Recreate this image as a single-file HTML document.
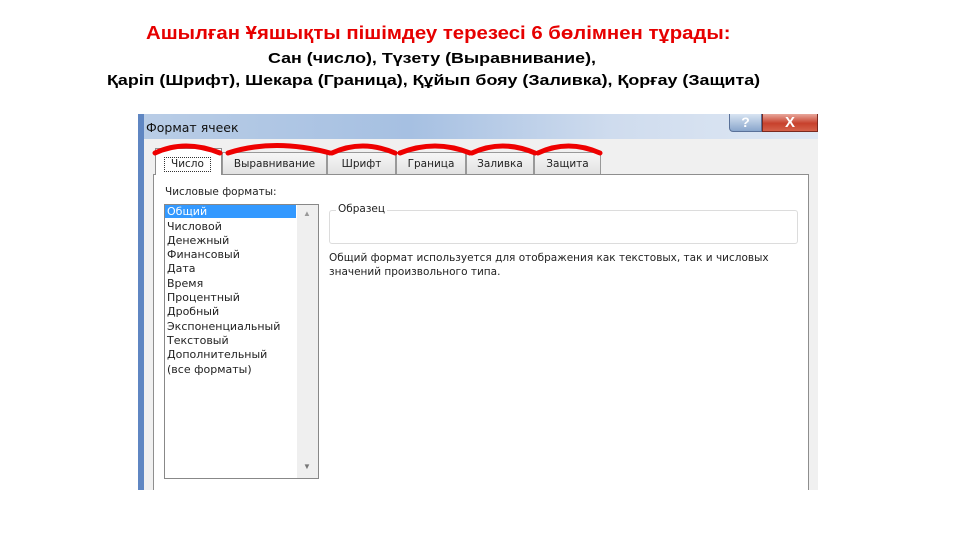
<!DOCTYPE html>
<html><head><meta charset="utf-8"><style>
*{margin:0;padding:0;box-sizing:border-box}
body{width:960px;height:540px;background:#fff;position:relative;overflow:hidden;font-family:"Liberation Sans","DejaVu Sans",sans-serif}
.h{position:absolute;font-weight:bold;white-space:nowrap;transform-origin:0 0}
.a{position:absolute}
.ui{font-family:"DejaVu Sans","Liberation Sans",sans-serif;font-size:10.5px;color:#222;white-space:nowrap}
.tab{position:absolute;top:152px;height:22px;background:linear-gradient(#f6f6f6,#e2e2e2);border:1px solid #999;border-bottom:none;text-align:center;line-height:22px}
.li{position:absolute;left:167px;font-size:11px}
</style></head><body>
<div class="h" style="left:146px;top:23px;font-size:18px;color:#e60000;transform:scaleX(1.13)">Ашылған Ұяшықты пішімдеу терезесі 6 бөлімнен тұрады:</div>
<div class="h" style="left:268px;top:50px;font-size:15px;color:#000;transform:scaleX(1.19)">Сан (число), Түзету (Выравнивание),</div>
<div class="h" style="left:107px;top:72px;font-size:15px;color:#000;transform:scaleX(1.19)">Қаріп (Шрифт), Шекара (Граница), Құйып бояу (Заливка), Қорғау (Защита)</div>

<div class="a" style="left:138px;top:114px;width:680px;height:376px;background:#f0f0f0"></div>
<div class="a" style="left:138px;top:114px;width:680px;height:25px;background:linear-gradient(90deg,#b9cde6,#a6c0e2 40%,#cfdcee 70%,#dfe8f4)"></div>
<div class="a" style="left:138px;top:114px;width:6px;height:376px;background:#5f86c2"></div>
<div class="a ui" style="left:146px;top:120px;font-size:12.5px;color:#111">Формат ячеек</div>
<div class="a" style="left:729px;top:114px;width:33px;height:18px;background:linear-gradient(#d8e4f2,#8aa6cc);border:1px solid #5a7199;border-top:none;border-radius:0 0 0 4px;color:#fff;font-weight:bold;text-align:center;font-size:14px;line-height:17px">?</div>
<div class="a" style="left:762px;top:114px;width:56px;height:18px;background:linear-gradient(#e8a79c,#c7412c 55%,#d5614a);border:1px solid #7a2a20;border-top:none;color:#fff;font-weight:bold;text-align:center;font-size:15px;line-height:17px">X</div>

<div class="a" style="left:153px;top:174px;width:656px;height:316px;background:#fff;border:1px solid #8e8e8e;border-bottom:none"></div>
<div class="tab ui" style="left:222px;width:105px">Выравнивание</div>
<div class="tab ui" style="left:327px;width:69px">Шрифт</div>
<div class="tab ui" style="left:396px;width:70px">Граница</div>
<div class="tab ui" style="left:466px;width:68px">Заливка</div>
<div class="tab ui" style="left:534px;width:67px">Защита</div>
<div class="a ui" style="left:155px;top:148px;width:67px;height:27px;background:#fff;border:1px solid #8e8e8e;border-bottom:none"><span style="position:absolute;left:8px;top:8px;border:1px dotted #333;padding:0 6px;line-height:13px">Число</span></div>
<svg class="a" style="left:150px;top:140px" width="460" height="20">
<g fill="none" stroke="#e00" stroke-width="5" stroke-linecap="round">
<path d="M5 13 Q35 -1 70 13"/><path d="M78 13 Q125 -2 180 13"/><path d="M182 13 Q212 -1 245 13"/><path d="M250 13 Q285 -1 320 13"/><path d="M322 13 Q352 -1 385 13"/><path d="M388 13 Q418 -1 450 13"/></g></svg>

<div class="a ui" style="left:165px;top:186px">Числовые форматы:</div>
<div class="a" style="left:164px;top:204px;width:155px;height:275px;border:1px solid #888;background:#fff"></div>
<div class="a" style="left:297px;top:205px;width:21px;height:273px;background:#efefef"></div>
<div class="a" style="left:303px;top:209px;font-size:8px;color:#999">▲</div>
<div class="a" style="left:303px;top:462px;font-size:8px;color:#777">▼</div>
<div class="a" style="left:165px;top:205px;width:131px;height:13px;background:#3399ff"></div>
<div class="li ui" style="top:205px;color:#fff">Общий</div>
<div class="li ui" style="top:220px">Числовой</div>
<div class="li ui" style="top:234px">Денежный</div>
<div class="li ui" style="top:248px">Финансовый</div>
<div class="li ui" style="top:262px">Дата</div>
<div class="li ui" style="top:277px">Время</div>
<div class="li ui" style="top:291px">Процентный</div>
<div class="li ui" style="top:305px">Дробный</div>
<div class="li ui" style="top:320px">Экспоненциальный</div>
<div class="li ui" style="top:334px">Текстовый</div>
<div class="li ui" style="top:348px">Дополнительный</div>
<div class="li ui" style="top:363px">(все форматы)</div>

<div class="a" style="left:329px;top:210px;width:469px;height:34px;border:1px solid #dcdcdc;border-radius:3px"></div>
<div class="a ui" style="left:336px;top:203px;background:#fff;padding:0 2px">Образец</div>
<div class="a ui" style="left:329px;top:251px;line-height:14px">Общий формат используется для отображения как текстовых, так и числовых<br>значений произвольного типа.</div>
</body></html>
